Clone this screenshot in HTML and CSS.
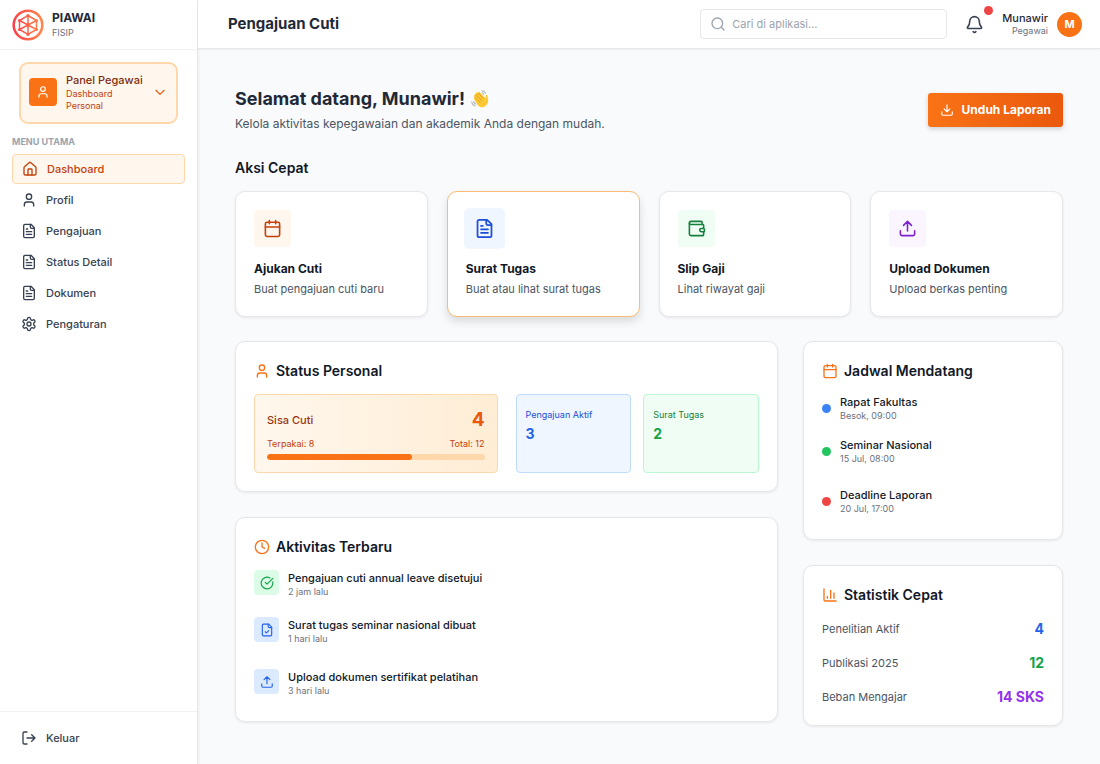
FILE: index.html
```html
<!DOCTYPE html>
<html lang="id">
<head>
<meta charset="utf-8">
<meta name="viewport" content="width=device-width, initial-scale=1">
<title>PIAWAI - Dashboard Pegawai</title>
<link rel="stylesheet" href="styles.css">
</head>
<body>
<svg class="sprite" aria-hidden="true">
  <symbol id="user" viewBox="0 0 24 24"><path d="M19 21v-2a4 4 0 0 0-4-4H9a4 4 0 0 0-4 4v2"/><circle cx="12" cy="7" r="4"/></symbol>
  <symbol id="home" viewBox="0 0 24 24"><path d="M15 21v-8a1 1 0 0 0-1-1h-4a1 1 0 0 0-1 1v8"/><path d="M3 10a2 2 0 0 1 .7-1.5l7-6a2 2 0 0 1 2.6 0l7 6A2 2 0 0 1 21 10v9a2 2 0 0 1-2 2H5a2 2 0 0 1-2-2z"/></symbol>
  <symbol id="file" viewBox="0 0 24 24"><path d="M15 2H6a2 2 0 0 0-2 2v16a2 2 0 0 0 2 2h12a2 2 0 0 0 2-2V7Z"/><path d="M14 2v4a2 2 0 0 0 2 2h4M10 9H8M16 13H8M16 17H8"/></symbol>
  <symbol id="file-check" viewBox="0 0 24 24"><path d="M15 2H6a2 2 0 0 0-2 2v16a2 2 0 0 0 2 2h12a2 2 0 0 0 2-2V7Z"/><path d="M14 2v4a2 2 0 0 0 2 2h4M9 15l2 2 4-4"/></symbol>
  <symbol id="gear" viewBox="0 0 24 24"><path d="M12.22 2h-.44a2 2 0 0 0-2 2v.18a2 2 0 0 1-1 1.73l-.43.25a2 2 0 0 1-2 0l-.15-.08a2 2 0 0 0-2.73.73l-.22.38a2 2 0 0 0 .73 2.73l.15.1a2 2 0 0 1 1 1.72v.51a2 2 0 0 1-1 1.74l-.15.09a2 2 0 0 0-.73 2.73l.22.38a2 2 0 0 0 2.73.73l.15-.08a2 2 0 0 1 2 0l.43.25a2 2 0 0 1 1 1.73V20a2 2 0 0 0 2 2h.44a2 2 0 0 0 2-2v-.18a2 2 0 0 1 1-1.73l.43-.25a2 2 0 0 1 2 0l.15.08a2 2 0 0 0 2.73-.73l.22-.39a2 2 0 0 0-.73-2.73l-.15-.08a2 2 0 0 1-1-1.74v-.5a2 2 0 0 1 1-1.74l.15-.09a2 2 0 0 0 .73-2.73l-.22-.38a2 2 0 0 0-2.73-.73l-.15.08a2 2 0 0 1-2 0l-.43-.25a2 2 0 0 1-1-1.73V4a2 2 0 0 0-2-2z"/><circle cx="12" cy="12" r="3"/></symbol>
  <symbol id="logout" viewBox="0 0 24 24"><path d="M9 21H5a2 2 0 0 1-2-2V5a2 2 0 0 1 2-2h4M16 17l5-5-5-5M21 12H9"/></symbol>
  <symbol id="chevron" viewBox="0 0 24 24"><path d="m5 9 7 7 7-7"/></symbol>
  <symbol id="search" viewBox="0 0 24 24"><circle cx="11" cy="11" r="8"/><path d="m21 21-4.3-4.3"/></symbol>
  <symbol id="bell" viewBox="0 0 24 24"><path d="M10.27 21a2 2 0 0 0 3.46 0M3.26 15.33A1 1 0 0 0 4 17h16a1 1 0 0 0 .74-1.67C19.41 13.96 18 12.5 18 8A6 6 0 0 0 6 8c0 4.5-1.41 5.96-2.74 7.33"/></symbol>
  <symbol id="download" viewBox="0 0 24 24"><path d="M21 15v4a2 2 0 0 1-2 2H5a2 2 0 0 1-2-2v-4M7 10l5 5 5-5M12 15V3"/></symbol>
  <symbol id="upload" viewBox="0 0 24 24"><path d="M21 15v4a2 2 0 0 1-2 2H5a2 2 0 0 1-2-2v-4M17 8l-5-5-5 5M12 3v12"/></symbol>
  <symbol id="calendar" viewBox="0 0 24 24"><path d="M8 2v4M16 2v4M3 10h18"/><rect x="3" y="4" width="18" height="18" rx="2"/></symbol>
  <symbol id="wallet" viewBox="0 0 24 24"><path d="M19 7V4a1 1 0 0 0-1-1H5a2 2 0 0 0 0 4h15a1 1 0 0 1 1 1v4h-3a2 2 0 0 0 0 4h3a1 1 0 0 0 1-1v-2a1 1 0 0 0-1-1"/><path d="M3 5v14a2 2 0 0 0 2 2h15a1 1 0 0 0 1-1v-4"/></symbol>
  <symbol id="clock" viewBox="0 0 24 24"><circle cx="12" cy="12" r="10"/><path d="M12 6v6l4 2"/></symbol>
  <symbol id="check" viewBox="0 0 24 24"><path d="M21.8 10A10 10 0 1 1 17 3.34M9 11l3 3L22 4"/></symbol>
  <symbol id="chart" viewBox="0 0 24 24"><path d="M3 3v16a2 2 0 0 0 2 2h16M18 17V9M13 17V5M8 17v-3"/></symbol>
</svg>
<div class="app">
  <aside class="sidebar">
    <div class="brand">
      <svg class="brand-logo" viewBox="0 0 32 32" fill="none" aria-hidden="true">
        <defs><linearGradient id="brand-gradient" gradientUnits="userSpaceOnUse" x1="0" y1="0" x2="32" y2="0"><stop offset="0" stop-color="#f8404a"/><stop offset="1" stop-color="#ff8a4c"/></linearGradient></defs>
        <g stroke="url(#brand-gradient)">
          <circle cx="16" cy="16" r="14.300" stroke-width="2.600"/>
          <path stroke-width="1.500" d="M16 6.500l8.500 5v9L16 25.500l-8.500-5v-9zM16 6.500v19M7.500 11.500l17 9M24.500 11.500l-17 9"/>
        </g>
        <g fill="url(#brand-gradient)"><circle cx="16" cy="16" r="2"/><circle cx="16" cy="6.500" r="1.600"/><circle cx="24.500" cy="11.500" r="1.600"/><circle cx="24.500" cy="20.500" r="1.600"/><circle cx="16" cy="25.500" r="1.600"/><circle cx="7.500" cy="20.500" r="1.600"/><circle cx="7.500" cy="11.500" r="1.600"/></g>
      </svg>
      <div><div class="brand-name">PIAWAI</div><div class="brand-unit">FISIP</div></div>
    </div>
    <button class="panel-switch" type="button">
      <span class="panel-icon"><svg class="icon icon-sm"><use href="#user"/></svg></span>
      <span class="panel-text"><span class="panel-name">Panel Pegawai</span><span class="panel-desc">Dashboard Personal</span></span>
      <svg class="icon icon-sm"><use href="#chevron"/></svg>
    </button>
    <div class="menu-label">MENU UTAMA</div>
    <nav class="menu">
      <a class="menu-item active" href="#dashboard"><svg class="icon"><use href="#home"/></svg>Dashboard</a>
      <a class="menu-item" href="#profil"><svg class="icon"><use href="#user"/></svg>Profil</a>
      <a class="menu-item" href="#pengajuan"><svg class="icon"><use href="#file"/></svg>Pengajuan</a>
      <a class="menu-item" href="#status"><svg class="icon"><use href="#file"/></svg>Status Detail</a>
      <a class="menu-item" href="#dokumen"><svg class="icon"><use href="#file"/></svg>Dokumen</a>
      <a class="menu-item" href="#pengaturan"><svg class="icon"><use href="#gear"/></svg>Pengaturan</a>
    </nav>
    <div class="sidebar-foot"><button class="menu-item" type="button"><svg class="icon"><use href="#logout"/></svg>Keluar</button></div>
  </aside>

  <div class="page">
    <header class="topbar">
      <div class="topbar-title">Pengajuan Cuti</div>
      <label class="search"><svg class="icon"><use href="#search"/></svg><input type="search" placeholder="Cari di aplikasi..." aria-label="Cari di aplikasi"></label>
      <button class="bell" type="button" aria-label="Notifikasi"><svg class="icon icon-lg"><use href="#bell"/></svg><span class="bell-dot"></span></button>
      <div class="account">
        <div class="account-text"><div class="account-name">Munawir</div><div class="account-role">Pegawai</div></div>
        <div class="avatar">M</div>
      </div>
    </header>

    <main class="content">
      <section class="welcome">
        <div>
          <h1>Selamat datang, Munawir!
            <svg class="wave" viewBox="0 0 24 24" fill="none" role="img" aria-label="Lambaian tangan">
              <path d="M10 20.500Q15 24 19 20Q23 16 21.500 11L20.800 7.500Q19 6 18.800 9L18.500 11L11.500 3.500Q9.500 3 10 5L8 4Q6 4.500 7 6.500L5.500 7Q4 8 5.500 9.500L5 11Q4.500 12.500 6 14Z" fill="#fcc934"/>
              <path d="M10 5l6 6.500M7 6.500l7 7.500M5.500 9.500l6.500 6.500" stroke="#d98b16" stroke-width=".9" stroke-linecap="round"/>
              <path d="M14.500 2q3 .3 4 3M14.500 4.500q1.500.5 2 2M2 15.500q.5 3.500 4 5M4.500 15q.5 2 2.500 3.300" stroke="#aeb4bd" stroke-width="1.300" stroke-linecap="round"/>
            </svg>
          </h1>
          <p>Kelola aktivitas kepegawaian dan akademik Anda dengan mudah.</p>
        </div>
        <button class="report" type="button"><svg class="icon icon-sm"><use href="#download"/></svg>Unduh Laporan</button>
      </section>

      <h2 class="section-title">Aksi Cepat</h2>
      <section class="actions">
        <a class="card action" href="#cuti"><span class="action-icon orange"><svg class="icon icon-lg"><use href="#calendar"/></svg></span><strong>Ajukan Cuti</strong><span>Buat pengajuan cuti baru</span></a>
        <a class="card action featured" href="#surat"><span class="action-icon blue"><svg class="icon icon-lg"><use href="#file"/></svg></span><strong>Surat Tugas</strong><span>Buat atau lihat surat tugas</span></a>
        <a class="card action" href="#gaji"><span class="action-icon green"><svg class="icon icon-lg"><use href="#wallet"/></svg></span><strong>Slip Gaji</strong><span>Lihat riwayat gaji</span></a>
        <a class="card action" href="#upload"><span class="action-icon purple"><svg class="icon icon-lg"><use href="#upload"/></svg></span><strong>Upload Dokumen</strong><span>Upload berkas penting</span></a>
      </section>

      <div class="columns">
        <div class="column">
          <section class="card">
            <h2 class="card-title"><svg class="icon"><use href="#user"/></svg>Status Personal</h2>
            <div class="status">
              <div class="leave">
                <div class="split"><span class="leave-label">Sisa Cuti</span><span class="leave-value">4</span></div>
                <div class="split leave-note"><span>Terpakai: 8</span><span>Total: 12</span></div>
                <div class="bar"><div class="bar-fill" style="width:66.67%"></div></div>
              </div>
              <div class="tiles">
                <div class="tile tile-blue"><div>Pengajuan Aktif</div><strong>3</strong></div>
                <div class="tile tile-green"><div>Surat Tugas</div><strong>2</strong></div>
              </div>
            </div>
          </section>
          <section class="card">
            <h2 class="card-title"><svg class="icon"><use href="#clock"/></svg>Aktivitas Terbaru</h2>
            <ul class="list activity">
              <li><span class="badge badge-green"><svg class="icon icon-sm"><use href="#check"/></svg></span><div><div class="item-title">Pengajuan cuti annual leave disetujui</div><div class="item-meta">2 jam lalu</div></div></li>
              <li><span class="badge"><svg class="icon icon-sm"><use href="#file-check"/></svg></span><div><div class="item-title">Surat tugas seminar nasional dibuat</div><div class="item-meta">1 hari lalu</div></div></li>
              <li><span class="badge"><svg class="icon icon-sm"><use href="#upload"/></svg></span><div><div class="item-title">Upload dokumen sertifikat pelatihan</div><div class="item-meta">3 hari lalu</div></div></li>
            </ul>
          </section>
        </div>
        <div class="column">
          <section class="card">
            <h2 class="card-title"><svg class="icon"><use href="#calendar"/></svg>Jadwal Mendatang</h2>
            <ul class="list schedule">
              <li><span class="dot dot-blue"></span><div><div class="item-title">Rapat Fakultas</div><div class="item-meta">Besok, 09:00</div></div></li>
              <li><span class="dot dot-green"></span><div><div class="item-title">Seminar Nasional</div><div class="item-meta">15 Jul, 08:00</div></div></li>
              <li><span class="dot dot-red"></span><div><div class="item-title">Deadline Laporan</div><div class="item-meta">20 Jul, 17:00</div></div></li>
            </ul>
          </section>
          <section class="card">
            <h2 class="card-title"><svg class="icon"><use href="#chart"/></svg>Statistik Cepat</h2>
            <dl class="stats">
              <div class="split"><dt>Penelitian Aktif</dt><dd class="c-blue">4</dd></div>
              <div class="split"><dt>Publikasi 2025</dt><dd class="c-green">12</dd></div>
              <div class="split"><dt>Beban Mengajar</dt><dd class="c-purple">14 SKS</dd></div>
            </dl>
          </section>
        </div>
      </div>
    </main>
  </div>
</div>
</body>
</html>
```
FILE: styles.css
```css
* { box-sizing: border-box; }
body { margin: 0; font-family: Inter, "Liberation Sans", sans-serif; font-size: 11px; line-height: 16px; color: #111827; background: #f9fafb; }
h1, h2, p, ul, dl, dd { margin: 0; padding: 0; }
ul { list-style: none; }
a { color: inherit; text-decoration: none; }
button { font: inherit; color: inherit; background: none; border: 0; padding: 0; cursor: pointer; }
.sprite { display: none; }
.icon { width: 16px; height: 16px; flex: none; fill: none; stroke: currentColor; stroke-width: 2; stroke-linecap: round; stroke-linejoin: round; }
.icon-sm { width: 14px; height: 14px; }
.icon-lg { width: 19px; height: 19px; }
.split { display: flex; align-items: center; justify-content: space-between; }

.app { display: grid; grid-template-columns: 198px minmax(0, 1fr); min-height: 100vh; }

.sidebar { display: flex; flex-direction: column; background: #fff; border-right: 1px solid #e5e7eb; box-shadow: 1px 0 2px rgb(0 0 0 / 5%); }
.brand { display: flex; align-items: center; gap: 8px; height: 50px; padding: 0 12px; border-bottom: 1px solid #f0f1f3; }
.brand-logo { width: 32px; height: 32px; }
.brand-name { font-size: 12px; font-weight: 700; line-height: 16px; color: #1f2937; }
.brand-unit { font-size: 9px; line-height: 14px; color: #6b7280; }
.panel-switch { display: flex; align-items: center; gap: 9px; margin: 12px 19px 13px; padding: 8px 9px 10px 8px; min-height: 62px; text-align: left; color: #ea580c; background: #fff7ed; border: 2px solid #fed7aa; border-radius: 9px; }
.panel-icon { display: grid; place-items: center; width: 28px; height: 28px; flex: none; color: #fff; background: #f97316; border-radius: 4px; }
.panel-text { flex: 1; min-width: 0; }
.panel-name { display: block; font-weight: 500; line-height: 15px; white-space: nowrap; color: #7c2d12; }
.panel-desc { display: block; width: 60px; font-size: 9px; line-height: 12px; color: #c2410c; }
.menu-label { padding: 0 12px; font-size: 9px; font-weight: 700; line-height: 10px; color: #9ca3af; }
.menu { display: grid; gap: 1px; padding: 7px 12px; }
.menu-item { display: flex; align-items: center; gap: 9px; width: 100%; height: 30px; padding: 0 8px; font-weight: 500; color: #374151; border: 1px solid transparent; border-radius: 4px; }
.menu-item.active { padding: 0 9px; color: #c2410c; background: #fff7ed; border-color: #fed7aa; }
.sidebar-foot { margin-top: auto; padding: 11px 12px; border-top: 1px solid #f0f1f3; }

.topbar { display: flex; align-items: center; height: 49px; padding: 0 18px 0 30px; background: #fff; border-bottom: 1px solid #e5e7eb; box-shadow: 0 1px 2px rgb(0 0 0 / 5%); }
.topbar-title { margin-right: auto; font-size: 15px; font-weight: 700; color: #1f2937; }
.search { display: flex; align-items: center; gap: 6px; width: 247px; height: 30px; padding: 0 9px; color: #9ca3af; border: 1px solid #e5e7eb; border-radius: 4px; }
.search input { flex: 1; min-width: 0; padding: 0; font: inherit; color: #1f2937; background: none; border: 0; outline: 0; }
.search input::placeholder { color: #9ca3af; }
.bell { position: relative; display: grid; margin: 0 18px; color: #374151; }
.bell-dot { position: absolute; top: -9px; right: -9px; width: 9px; height: 9px; background: #ef4444; border-radius: 50%; }
.account { display: flex; align-items: center; gap: 9px; text-align: right; }
.account-name { font-weight: 500; line-height: 14px; color: #1f2937; }
.account-role { font-size: 9px; line-height: 12px; color: #6b7280; }
.avatar { display: grid; place-items: center; width: 25px; height: 25px; font-weight: 700; color: #fff; background: #f97316; border-radius: 50%; }

.content { padding: 37px; }
.welcome { display: flex; align-items: center; justify-content: space-between; gap: 16px; }
h1 { display: flex; align-items: center; gap: 5px; font-size: 18px; font-weight: 700; line-height: 25px; color: #1f2937; }
.wave { width: 20px; height: 20px; }
.welcome p { margin-top: 4px; font-size: 12px; line-height: 18px; color: #4b5563; }
.report { display: flex; align-items: center; gap: 8px; height: 34px; padding: 0 12px; font-size: 12px; font-weight: 700; color: #fff; background: linear-gradient(90deg, #f97316, #ea580c); border-radius: 3px; box-shadow: 0 2px 5px rgb(0 0 0 / 18%); }
.section-title { margin: 25px 0 13px; font-size: 14px; font-weight: 600; line-height: 20px; }

.card { background: #fff; border: 1px solid #e5e7eb; border-radius: 10px; padding: 18px; box-shadow: 0 1px 3px rgb(0 0 0 / 8%); }
.actions { display: grid; grid-template-columns: repeat(4, minmax(0, 1fr)); gap: 19px; }
.action { display: flex; flex-direction: column; height: 126px; line-height: 18px; color: #4b5563; }
.action strong { margin: 13px 0 2px; font-size: 12px; font-weight: 700; color: #111827; }
.action-icon { display: grid; place-items: center; width: 37px; height: 37px; border-radius: 4px; }
.featured { border-color: #fdba74; box-shadow: 0 5px 9px rgb(0 0 0 / 12%); }
.featured .action-icon { transform: scale(1.1); }
.orange { color: #c2410c; background: #fff7ed; }
.blue { color: #1d4ed8; background: #eff6ff; }
.green { color: #15803d; background: #f0fdf4; }
.purple { color: #7e22ce; background: #faf5ff; }

.columns { display: grid; grid-template-columns: minmax(0, 543fr) minmax(0, 260fr); gap: 25px; margin-top: 24px; align-items: start; }
.column { display: grid; gap: 25px; }
.card-title { display: flex; align-items: center; gap: 6px; font-size: 14px; font-weight: 600; line-height: 22px; }
.card-title .icon { color: #f97316; }
.status { display: grid; grid-template-columns: minmax(0, 1fr) minmax(0, 1fr); gap: 18px; margin-top: 12px; }
.leave { height: 79px; padding: 12px; background: linear-gradient(90deg, #fff7ed, #ffedd5); border: 1px solid #fed7aa; border-radius: 4px; }
.leave-label { font-weight: 500; color: #9a3412; }
.leave-value { font-size: 19px; font-weight: 700; line-height: 25px; color: #ea580c; }
.leave-note { margin-top: 6px; font-size: 9px; line-height: 12px; color: #c2410c; }
.bar { height: 6px; margin-top: 4px; overflow: hidden; background: #fed7aa; border-radius: 3px; }
.bar-fill { height: 100%; background: #f97316; border-radius: 3px; }
.tiles { display: grid; grid-template-columns: 1fr 1fr; gap: 12px; }
.tile { padding: 13px 9px; font-size: 9px; line-height: 14px; border: 1px solid; border-radius: 4px; }
.tile strong { display: block; margin-top: 2px; font-size: 14px; line-height: 20px; }
.tile-blue { color: #1d4ed8; background: #eff6ff; border-color: #bfdbfe; }
.tile-blue strong, .c-blue { color: #2563eb; }
.tile-green { color: #15803d; background: #f0fdf4; border-color: #bbf7d0; }
.tile-green strong, .c-green { color: #16a34a; }
.c-purple { color: #9333ea; }

.list { padding: 12px 0 6px; }
.list li { display: flex; gap: 9px; }
.item-title { font-weight: 500; line-height: 16px; }
.item-meta { font-size: 9px; line-height: 12px; color: #6b7280; }
.activity li + li { margin-top: 19px; }
.activity li:last-child { margin-top: 24px; }
.badge { display: grid; place-items: center; width: 25px; height: 25px; color: #2563eb; background: #dbeafe; border-radius: 4px; }
.badge-green { color: #16a34a; background: #dcfce7; }
.schedule li { align-items: center; }
.schedule li + li { margin-top: 15px; }
.schedule li:last-child { margin-top: 22px; }
.dot { width: 9px; height: 9px; border-radius: 50%; }
.dot-blue { background: #3b82f6; }
.dot-green { background: #22c55e; }
.dot-red { background: #ef4444; }
.stats { display: grid; gap: 14px; margin-top: 13px; line-height: 20px; color: #4b5563; }
.stats dd { font-size: 14px; font-weight: 700; }
```
